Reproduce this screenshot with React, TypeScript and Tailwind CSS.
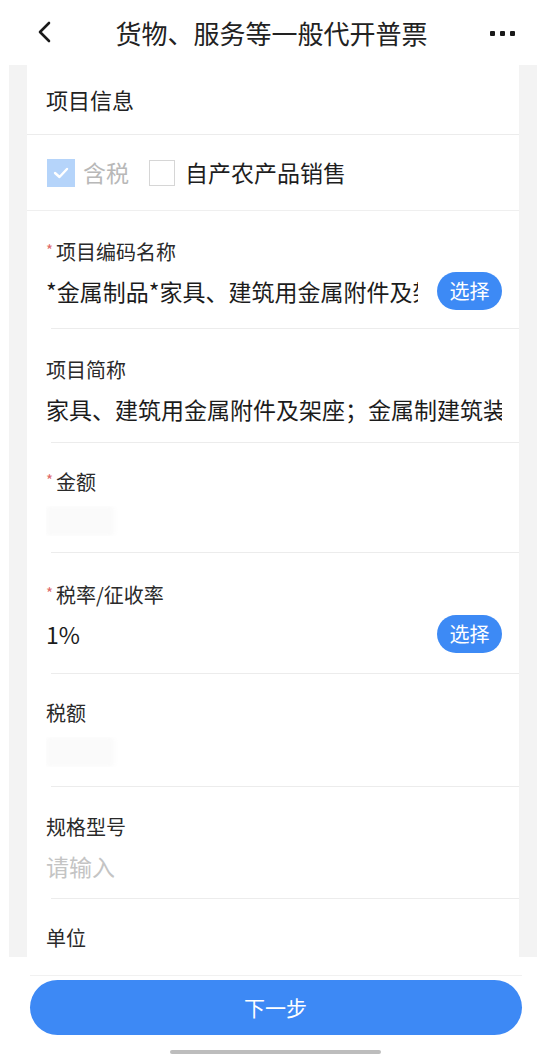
import React from "react";

type Row = {
  label: string;
  required?: boolean;
  value?: string;
  placeholder?: string;
  blurred?: boolean;
  select?: boolean;
  height: string;
  pad: string;
};

const rows: Row[] = [
  { label: "项目编码名称", required: true, value: "*金属制品*家具、建筑用金属附件及架座；金属制建筑装饰", select: true, height: "h-[118px]", pad: "pt-[27px]" },
  { label: "项目简称", value: "家具、建筑用金属附件及架座；金属制建筑装饰", height: "h-[114px]", pad: "pt-[27px]" },
  { label: "金额", required: true, blurred: true, height: "h-[110px]", pad: "pt-[25px]" },
  { label: "税率/征收率", required: true, value: "1%", select: true, height: "h-[121px]", pad: "pt-[28px]" },
  { label: "税额", blurred: true, height: "h-[113px]", pad: "pt-[25px]" },
  { label: "规格型号", placeholder: "请输入", height: "h-[112px]", pad: "pt-[26px]" },
  { label: "单位", height: "h-[112px]", pad: "pt-[25px]" },
];

function FieldRow({ row, last }: { row: Row; last: boolean }) {
  return (
    <div className={`${row.height} flex flex-col ${last ? "" : "border-b border-[#ececec]"} ml-[24px]`}>
      <div className={`${row.pad} -ml-[24px] pl-[19px] flex flex-col`}>
        <div className="flex items-center h-[28px] text-[20px] text-[#2a2a2a]">
          {row.required && <span className="text-[#e06a6a] text-[15px] mr-[3px] -mt-[4px]">*</span>}
          <span>{row.label}</span>
        </div>
        <div className="mt-[6px] h-[38px] flex items-center pr-[17px]">
          <div className="flex-1 min-w-0 overflow-hidden whitespace-nowrap text-[23px] text-[#1c1c1c]">
            {row.value && <span>{row.value}</span>}
            {row.placeholder && <span className="text-[#c4c4c4]">{row.placeholder}</span>}
            {row.blurred && (
              <div className="w-[68px] h-[30px] rounded-sm bg-[#fafafa] blur-[2px]" />
            )}
          </div>
          {row.select && (
            <button className="ml-[19px] w-[65px] h-[38px] rounded-full bg-[#3d8af5] text-white text-[20px] shrink-0">
              选择
            </button>
          )}
        </div>
      </div>
    </div>
  );
}

export default function App() {
  return (
    <div className="w-[551px] h-[1058px] bg-white flex flex-col overflow-hidden font-['Noto_Sans_CJK_SC','Noto_Sans',sans-serif]">
      {/* header */}
      <div className="h-[65px] shrink-0 flex items-center pl-[37px] pr-[36px]">
        <svg width="16" height="22" viewBox="0 0 16 22" className="-mt-[2px] shrink-0">
          <path d="M12 2 L3 11 L12 20" fill="none" stroke="#1a1a1a" strokeWidth="2.6" strokeLinecap="round" strokeLinejoin="round" />
        </svg>
        <div className="flex-1 text-center text-[26px] text-[#222] leading-none">货物、服务等一般代开普票</div>
        <div className="flex items-center gap-[5px] mt-[2px] shrink-0">
          <span className="w-[5px] h-[5px] rounded-[1px] bg-[#1a1a1a]" />
          <span className="w-[5px] h-[5px] rounded-[1px] bg-[#1a1a1a]" />
          <span className="w-[5px] h-[5px] rounded-[1px] bg-[#1a1a1a]" />
        </div>
      </div>

      {/* content */}
      <div className="h-[892px] shrink-0 ml-[9px] mr-[14px] bg-[#f3f3f3] px-[18px] overflow-hidden">
        <div className="bg-white">
          <div className="h-[70px] flex items-center pl-[19px] text-[22px] text-[#222] border-b border-[#ececec]">
            项目信息
          </div>
          <div className="h-[76px] flex items-center pl-[20px] border-b border-[#efefef]">
            <div className="w-[28px] h-[28px] bg-[#b5d4fa] flex items-center justify-center">
              <svg width="18" height="14" viewBox="0 0 18 14">
                <path d="M3 7 L7.5 11 L15 3" fill="none" stroke="white" strokeWidth="2.4" strokeLinecap="round" strokeLinejoin="round" />
              </svg>
            </div>
            <span className="ml-[8px] text-[23px] text-[#b8b8b8]">含税</span>
            <div className="ml-[20px] w-[26px] h-[26px] border-[1.5px] border-[#d6d6d6]" />
            <span className="ml-[10px] text-[23px] text-[#1e1e1e]">自产农产品销售</span>
          </div>
          {rows.map((r, i) => (
            <FieldRow key={r.label} row={r} last={i === rows.length - 1} />
          ))}
        </div>
      </div>

      {/* bottom bar */}
      <div className="flex-1 flex flex-col items-center">
        <div className="w-[492px] mt-[18px] border-t border-[#f1f1f1]" />
        <button className="mt-[4px] w-[492px] h-[55px] rounded-full bg-[#3d89f5] text-white text-[21px]">
          下一步
        </button>
        <div className="mt-[15px] w-[211px] h-[4px] rounded-full bg-[#bdbdbd]" />
      </div>
    </div>
  );
}
